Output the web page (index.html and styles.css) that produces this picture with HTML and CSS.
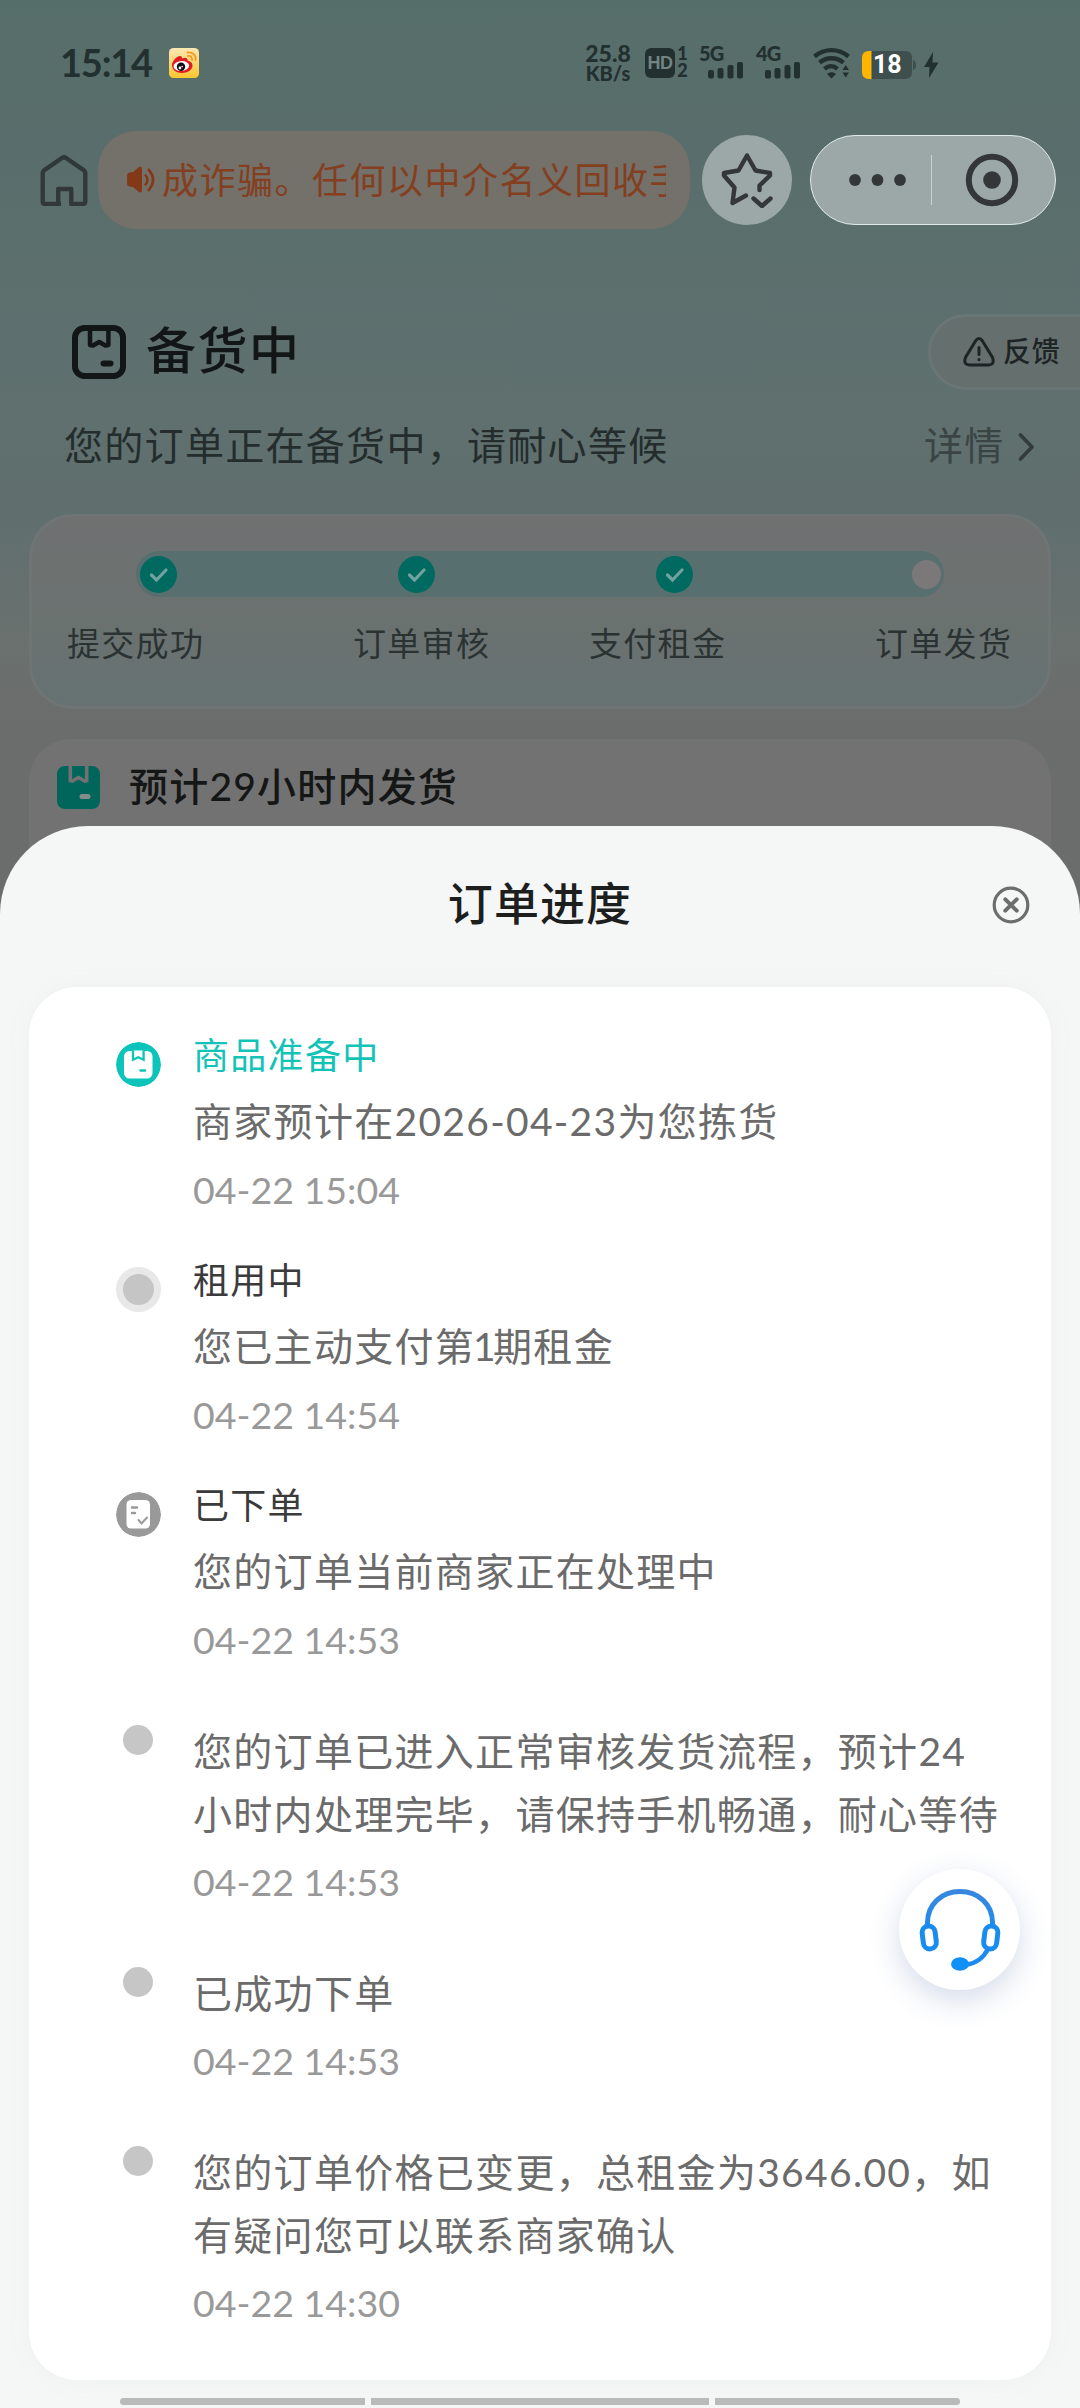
FILE: index.html
```html
<!DOCTYPE html>
<html lang="zh-CN">
<head>
<meta charset="utf-8">
<title>订单进度</title>
<link rel="stylesheet" href="styles.css">
</head>
<body>
<div class="screen">
  <header class="status">
    <span class="clock">15:14</span>
    <svg class="weibo" width="30" height="30" viewBox="0 0 30 30">
      <defs><linearGradient id="wb" x1="0" y1="0" x2="0" y2="1"><stop offset="0" stop-color="#fbe7b4"/><stop offset="1" stop-color="#fbc62f"/></linearGradient></defs>
      <rect width="30" height="30" rx="4.500" fill="url(#wb)"/>
      <path d="M3 17c0-4 5-9 8-9 2 0 2 1.500 2 2.500 3-1.500 6-1 5.500 2 3 .8 5 2.500 5 5 0 4.500-5 7.500-10.500 7.500S3 22 3 17z" fill="#e01c20"/>
      <ellipse cx="12.300" cy="18" rx="7.800" ry="5" fill="#fff" transform="rotate(-6 12.300 18)"/>
      <circle cx="12" cy="18.800" r="4.200" fill="#120c14"/>
      <circle cx="11" cy="20" r="1.400" fill="#fff"/><circle cx="13.200" cy="18.500" r=".8" fill="#fff"/>
      <path d="M18.500 4.500c5-1 9 3 8 7.500M19 8c2.500-.5 4.500 1.500 4 4" fill="none" stroke="#f49a1c" stroke-width="1.800" stroke-linecap="round"/>
    </svg>
    <span class="speed"><b class="rate">25.8</b><b class="unit">KB/s</b></span>
    <span class="hd">HD</span>
    <span class="sims"><b>1</b><b>2</b></span>
    <span class="net">
      <b>5G</b>
      <svg width="36" height="17" viewBox="0 0 36 17" fill="#22302f"><rect y="8" width="6" height="8.500" rx="2"/><rect x="9.500" y="6" width="6" height="10.500" rx="2"/><rect x="19.500" y="3" width="6" height="13.500" rx="2"/><rect x="29" width="6" height="16.500" rx="2"/></svg>
    </span>
    <span class="net">
      <b>4G</b>
      <svg width="36" height="17" viewBox="0 0 36 17" fill="#22302f"><rect y="8" width="6" height="8.500" rx="2"/><rect x="9.500" y="6" width="6" height="10.500" rx="2"/><rect x="19.500" y="3" width="6" height="13.500" rx="2"/><rect x="29" width="6" height="16.500" rx="2"/></svg>
    </span>
    <svg class="wifi" width="38" height="32" viewBox="0 0 38 32" fill="none" stroke="#22302f" stroke-width="4.400">
      <path d="M1.500 9.500C11.500 1 25.500 1 35.500 9.500M6.500 15.700c7-6 17-6 24 0M11.500 21.800c4-3.500 9-3.500 13 0"/>
      <path d="M14 27c2.500-2.300 6.500-2.300 9 0l-4.500 4.500zM29.500 23l3.200-5 3.200 5zM29.500 25.500l3.200 5 3.200-5z" fill="#22302f" stroke="none"/>
    </svg>
    <span class="battery">
      <svg width="54" height="28" viewBox="0 0 54 28">
        <path d="M9 0h34q7 0 7 7v14q0 7-7 7H9z" fill="#3e4f4e"/><path d="M51 9q3 1 3 5t-3 5z" fill="#3e4f4e"/>
        <path d="M9.500 0v28H7q-7 0-7-7V7q0-7 7-7z" fill="#fdb503"/>
      </svg>
      <b>18</b>
    </span>
    <svg class="bolt" width="15" height="26" viewBox="0 0 15 26"><path d="M9 0 0 15h5.500L5 26l9.500-15.500H8.500z" fill="#22302f"/></svg>
  </header>

  <nav class="topbar">
    <svg class="home" width="48" height="52" viewBox="0 0 48 52" fill="none" stroke="#303839" stroke-width="4.400" stroke-linejoin="round">
      <path d="M21 50H5.500Q2.700 50 2.700 47.200V19Q2.700 17.300 4 16.400L22 4q2-1.400 4 0l18 12.400q1.300.9 1.300 2.600V47.200Q45.300 50 42.500 50H31.300V35H18.200V50" />
    </svg>
    <div class="notice">
      <svg width="29" height="28" viewBox="0 0 29 28"><path d="M0 9.500Q0 7 2.500 6.500L6 6l6-5q3-1.500 3 1.500v22q0 3-3 1.500l-6-5-3.500-.5Q0 20 0 18z" fill="#833917"/><path d="M18 8.500q5 5.500 0 11M21 3q10 10.500 0 22" fill="none" stroke="#833917" stroke-width="2.600"/></svg>
      <p class="notice-text">成诈骗。任何以中介名义回收手机</p>
    </div>
    <div class="star">
      <svg width="52" height="56" viewBox="0 0 52 56" fill="none" stroke="#343738" stroke-width="4.400" stroke-linejoin="round" stroke-linecap="round"><path d="M25 43.500 11.500 51 13.500 35.500 3 23.500V21L17.500 18.500 26 3.500 34.500 18.500 49 21V23.500L38.500 33.500 38.500 38M32.500 46.500l8.500 7.500 8.500-7.500"/></svg>
    </div>
    <div class="capsule">
      <svg width="58" height="12" viewBox="0 0 58 12" fill="#343738"><circle cx="6" cy="6" r="5.900"/><circle cx="28.500" cy="6" r="5.900"/><circle cx="51" cy="6" r="5.900"/></svg>
      <i class="divider"></i>
      <svg width="54" height="54" viewBox="0 0 54 54" fill="#343738"><circle cx="27" cy="27" r="23.200" fill="none" stroke="#343738" stroke-width="6"/><circle cx="27" cy="27" r="8.800"/></svg>
    </div>
  </nav>

  <main>
    <section class="heading">
      <svg width="54" height="54" viewBox="0 0 54 54" fill="none" stroke="#121616" stroke-width="6" stroke-linejoin="round" stroke-linecap="round"><rect x="3" y="3" width="48" height="48" rx="9.500"/><path d="M18 4v16l3 .5 6.200-3.500 6.200 3.500 3-.5V4" stroke-width="4.500"/><path d="M31.500 38.500h7"/></svg>
      <h1>备货中</h1>
      <div class="feedback">
        <svg width="32" height="30" viewBox="0 0 32 30" fill="none" stroke="#1d2424" stroke-width="3" stroke-linecap="round"><path d="M12.500 4q3.500-4.800 7 0l10 16.500q2.500 7-4 7.500h-19q-6.500-.5-4-7.500z"/><path d="M16 10.500v7M16 22.500v.3"/></svg>
        <span>反馈</span>
      </div>
    </section>
    <section class="sub"><p>您的订单正在备货中，请耐心等候</p><span class="more">详情</span>
      <svg width="17" height="30" viewBox="0 0 17 30" fill="none" stroke="#333b3b" stroke-width="3.600" stroke-linecap="round" stroke-linejoin="round"><path d="M2.500 3 14 15 2.500 27"/></svg>
    </section>
    <section class="progress">
      <div class="track">
        <svg class="tick" viewBox="0 0 37 37"><circle cx="18.500" cy="18.500" r="18.500" fill="#006a60"/><path d="m11.500 19 5 5 9.500-10" fill="none" stroke="#72a29f" stroke-width="3.200" stroke-linecap="round"/></svg>
        <svg class="tick" viewBox="0 0 37 37"><circle cx="18.500" cy="18.500" r="18.500" fill="#006a60"/><path d="m11.500 19 5 5 9.500-10" fill="none" stroke="#72a29f" stroke-width="3.200" stroke-linecap="round"/></svg>
        <svg class="tick" viewBox="0 0 37 37"><circle cx="18.500" cy="18.500" r="18.500" fill="#006a60"/><path d="m11.500 19 5 5 9.500-10" fill="none" stroke="#72a29f" stroke-width="3.200" stroke-linecap="round"/></svg>
        <i class="pending"></i>
      </div>
      <div class="labels"><span>提交成功</span><span>订单审核</span><span>支付租金</span><span>订单发货</span></div>
    </section>
    <section class="eta">
      <svg width="43" height="43" viewBox="0 0 43 43"><rect width="43" height="43" rx="8" fill="#00665b"/><path d="M13.300 0v14.500l2 .5 6.200-3.500 6.200 3.500 2-.5V0" fill="none" stroke="#717171" stroke-width="3.600"/><path d="M25 30.500h6" stroke="#848c8a" stroke-width="5" stroke-linecap="round"/></svg>
      <p>预计29小时内发货</p>
    </section>
  </main>

  <div class="sheet">
    <div class="sheet-head">
      <h2>订单进度</h2>
      <svg class="close" width="38" height="38" viewBox="0 0 38 38" fill="none" stroke="#6c6e6d" stroke-width="3.200" stroke-linecap="round"><circle cx="19" cy="19" r="16.800"/><path d="m13.300 13.300 11.400 11.400M24.700 13.300 13.300 24.700" stroke-width="4"/></svg>
    </div>
    <ol class="timeline">
      <li class="stage">
        <svg class="mark" viewBox="0 0 45 45"><circle cx="22.500" cy="22.500" r="22.500" fill="#0cc4b9"/><rect x="8" y="9" width="28.500" height="27.500" rx="5.500" fill="#fff"/><path d="M17 8.500v9.300l5.300-2.500 5.300 2.500V8.500" fill="#fff" stroke="#0cc4b9" stroke-width="2.300"/><path d="M24.500 28.500h4.500" stroke="#0cc4b9" stroke-width="2.400" stroke-linecap="round"/></svg>
        <div><h3 class="active">商品准备中</h3><p>商家预计在2026-04-23为您拣货</p><time>04-22 15:04</time></div>
      </li>
      <li class="stage">
        <i class="mark ring"></i>
        <div><h3>租用中</h3><p>您已主动支付第<span class="one">1</span>期租金</p><time>04-22 14:54</time></div>
      </li>
      <li class="stage">
        <svg class="mark" viewBox="0 0 45 45"><circle cx="22.500" cy="22.500" r="22.500" fill="#999"/><rect x="10.500" y="8" width="23.500" height="28.500" rx="4.500" fill="#fff"/><path d="M16 15.500h5M16 21h3" stroke="#999" stroke-width="2.400" stroke-linecap="round"/><path d="m22.500 28 3 3.500 5.500-6" fill="none" stroke="#999" stroke-width="2" stroke-linecap="round"/></svg>
        <div><h3>已下单</h3><p>您的订单当前商家正在处理中</p><time>04-22 14:53</time></div>
      </li>
      <li class="note"><i class="mark dot"></i><div><p>您的订单已进入正常审核发货流程，预计24<br>小时内处理完毕，请保持手机畅通，耐心等待</p><time>04-22 14:53</time></div></li>
      <li class="note"><i class="mark dot"></i><div><p>已成功下单</p><time>04-22 14:53</time></div></li>
      <li class="note"><i class="mark dot"></i><div><p>您的订单价格已变更，总租金为3646.00，如<br>有疑问您可以联系商家确认</p><time>04-22 14:30</time></div></li>
    </ol>
    <div class="navbars"><i></i><i></i><i></i></div>
  </div>

  <div class="service">
    <svg width="82" height="84" viewBox="0 0 82 84" fill="none" stroke="#1a8cf0" stroke-width="5">
      <defs><linearGradient id="hs" gradientUnits="userSpaceOnUse" x1="0" y1="0" x2="0" y2="60"><stop offset="0" stop-color="#3a86dc"/><stop offset="1" stop-color="#108ff9"/></linearGradient></defs>
      <path d="M8.500 39V34.500C8.500 16 23 3.500 41 3.500S73.500 16 73.500 34.500V39" stroke="url(#hs)"/>
      <rect x="3.800" y="38" width="13" height="23" rx="6.500" transform="rotate(-7 10 50)"/>
      <rect x="65.200" y="38" width="13" height="23" rx="6.500" transform="rotate(7 72 50)"/>
      <path d="M69 61Q62 74.500 48 76.500" stroke-width="4.500"/>
      <ellipse cx="41" cy="76" rx="9" ry="6.800" fill="#108ff9" stroke="none"/>
    </svg>
  </div>
</div>
</body>
</html>
```

FILE: styles.css
```css
* { box-sizing: border-box; margin: 0; padding: 0; }

body {
  width: 1080px;
  height: 2408px;
  overflow: hidden;
  font-family: Lato, "Noto Sans CJK SC", sans-serif;
}

svg { display: block; flex: none; }
h1, h2, h3 { font-weight: 500; }

.screen {
  position: relative;
  width: 1080px;
  height: 2408px;
  overflow: hidden;
  background: linear-gradient(#566e69 0, #596e6c 150px, #5f706f 420px, #606f6e 520px, #6a716f 640px, #6b6d6c 720px, #6b6d6c 100%);
}

/* status bar */
.status { display: flex; height: 126px; padding-left: 60px; color: #22302f; font-weight: 700; }
.clock { width: 109px; margin-top: 38px; font-size: 38px; line-height: 48px; letter-spacing: -1.200px; }
.weibo { margin-top: 48px; }
.speed { display: grid; grid-template-rows: 20px 20px; justify-items: center; width: 48px; margin: 43px 12px 0 385px; line-height: 20px; }
.rate { font-size: 23px; }
.unit { font-size: 20px; }
.hd { width: 30px; height: 30px; margin: 48px 0 0 1px; border-radius: 6px; background: #22302f; color: #728483; font: 700 18px/31px "Liberation Sans", sans-serif; text-align: center; letter-spacing: -.5px; }
.sims { display: grid; grid-template-rows: 17px 17px; width: 11px; height: 34px; margin: 45px 0 0 2px; font-size: 18px; line-height: 17px; text-align: center; }
.net { display: flex; flex-direction: column; width: 45px; height: 34px; margin: 45px 0 0 11px; font-size: 20px; line-height: 17px; }
.net + .net { margin-left: 12px; }
.net b { letter-spacing: -.8px; }
.net svg { margin-left: 9px; }
.wifi { margin: 47px 0 0 12px; }
.battery { display: grid; margin: 51px 0 0 11px; }
.battery svg, .battery b { grid-area: 1 / 1; }
.battery b { padding-left: 11px; font: 700 25px/28px Roboto, sans-serif; color: #fff; }
.bolt { margin: 52px 0 0 8px; }

/* navigation bar */
.topbar { display: flex; align-items: center; height: 108px; padding-left: 40px; }
.home { margin-right: 10px; }
.notice { display: flex; align-items: center; width: 592px; height: 98px; padding-left: 29px; border-radius: 38px; background: #74706a; }
.notice-text { width: 504px; margin-left: 6px; overflow: hidden; white-space: nowrap; font-size: 36px; line-height: 54px; letter-spacing: 1.500px; color: #833f20; }
.star { display: flex; align-items: center; justify-content: center; width: 90px; height: 90px; margin-left: 12px; border-radius: 50%; background: #9ca8a7; }
.capsule { display: flex; align-items: center; width: 246px; height: 90px; margin-left: 18px; padding-left: 38px; border: 1.500px solid #dfeceb; border-radius: 45px; background: #9ca8a7; }
.divider { width: 1px; height: 50px; margin: 0 33px 0 24px; background: #c9d3d2; }

/* order heading */
.heading { display: flex; align-items: center; height: 74px; margin-top: 81px; padding-left: 72px; }
.heading h1 { flex: none; width: 782px; height: 74px; margin-left: 20px; font-size: 50px; line-height: 71px; letter-spacing: 1.500px; color: #121616; }
.feedback { display: flex; align-items: center; gap: 8px; flex: none; width: 160px; height: 76px; padding-left: 32px; border: 3px solid #697675; border-radius: 38px 0 0 38px; background: #656f6e; font-size: 28px; font-weight: 500; letter-spacing: .8px; color: #1d2424; white-space: nowrap; }
.feedback span { height: 44px; line-height: 42px; }
.sub { display: flex; align-items: center; height: 60px; margin-top: 28px; padding-left: 64px; font-size: 39px; letter-spacing: 1.300px; color: #242d2c; }
.sub p, .more { height: 60px; line-height: 57px; }
.sub p { width: 860px; }
.more { width: 94px; color: #3a4443; }

/* shipment progress */
.progress { width: 1022px; height: 195px; margin: 37px 0 0 29px; padding-top: 34px; border: 3px solid #6f7574; border-radius: 44px; background: linear-gradient(#6f7171, #6a7270 60%, #667273); }
.track { display: flex; align-items: center; width: 808px; height: 46px; margin-left: 104px; padding-left: 4px; border-radius: 23px; background: #576f6e; }
.tick { width: 37px; height: 37px; margin-right: 221px; }
.pending { width: 29px; height: 29px; margin-left: -2px; border-radius: 50%; background: #7b7879; }
.labels { display: grid; grid-template-columns: 286px 236px 286px auto; margin: 21px 0 0 35px; font-size: 33px; line-height: 50px; letter-spacing: 1.300px; color: #2b3232; }
.eta { display: flex; align-items: center; width: 1022px; height: 150px; margin: 30px 0 0 29px; padding: 0 0 53px 28px; border-radius: 42px; background: #727272; }
.eta p { height: 60px; margin-left: 29px; font-size: 39px; font-weight: 500; line-height: 57px; letter-spacing: 1.200px; color: #151616; }

/* progress sheet overlays the page */
.sheet { position: absolute; left: 0; right: 0; bottom: 0; height: 1582px; border-radius: 88px 88px 0 0; background: #f5f7f6; }
.sheet-head { display: grid; grid-template-columns: 1fr auto 1fr; align-items: center; height: 161px; padding: 0 50px 3px; }
.sheet-head h2 { grid-column: 2; height: 66px; font-size: 45px; line-height: 64px; letter-spacing: 1.100px; color: #1d1e1e; }
.close { justify-self: end; }
.timeline { width: 1022px; height: 1393px; margin-left: 29px; padding: 41px 0 0 87px; border-radius: 48px; background: #fff; box-shadow: 0 0 24px #eef0ef; list-style: none; }
.timeline li { display: flex; }
.timeline h3 { height: 54px; margin-bottom: 8px; font-size: 36px; font-weight: 400; line-height: 54px; letter-spacing: 1.300px; color: #3b3b3b; }
.timeline h3.active { color: #14c3b8; }
.timeline p { font-size: 39px; line-height: 63px; letter-spacing: 1.300px; color: #6b6b6b; white-space: nowrap; }
.timeline .one { margin: 0 -4px 0 -2px; }
.timeline time { display: block; margin-top: 9.500px; font-size: 37.500px; line-height: 54px; color: #999; }
.stage { height: 225px; }
.mark { flex: none; width: 45px; height: 45px; margin: 14px 32px 0 0; border-radius: 50%; }
.ring { border: 7px solid #e8e8e8; background: #c5c5c5; }
.dot { width: 30px; height: 30px; margin: 5.500px 40px 0 7px; background: #c6c6c6; }
.note { margin-bottom: 52.500px; }
.stage + .note { margin-top: 16.500px; }
.navbars { display: grid; grid-template-columns: 245px 338px 245px; gap: 6px; margin: 18px 0 0 120px; }
.navbars i { height: 7px; background: #b9bbba; }
.navbars i:first-child { border-radius: 4px 0 0 4px; }
.navbars i:last-child { border-radius: 0 4px 4px 0; }

/* floating service button */
.service { position: absolute; left: 899px; top: 1869px; display: flex; align-items: center; justify-content: center; width: 121px; height: 121px; border-radius: 50%; background: #fff; box-shadow: 0 10px 30px rgba(60, 90, 160, .22); }
```
